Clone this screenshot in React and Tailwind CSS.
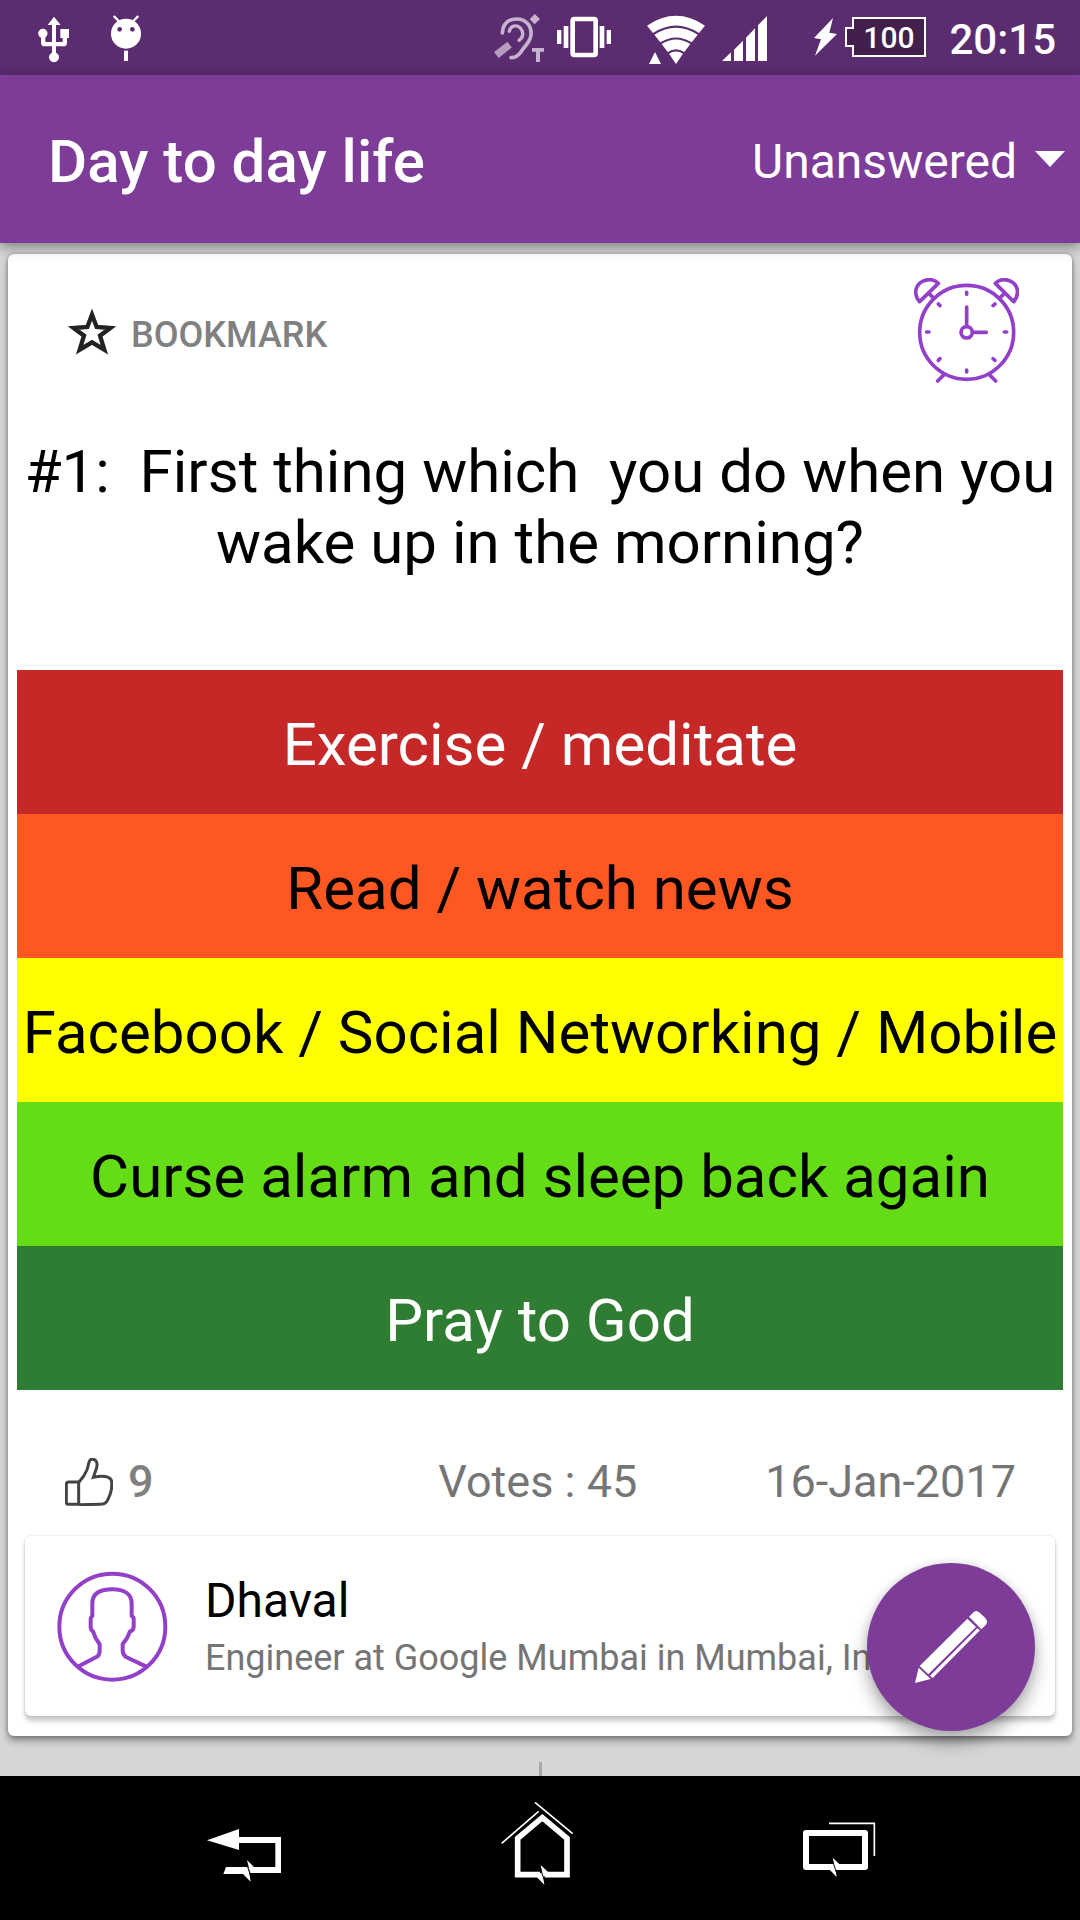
import React from "react";
import clsx from "clsx";

const filters = ["Unanswered", "Answered", "Bookmarked"];

const question = {
  text: "#1:  First thing which  you do when you wake up in the morning?",
  likes: 9,
  votes: 45,
  date: "16-Jan-2017",
  options: [
    { label: "Exercise / meditate", className: "bg-[#c62828] text-white" },
    { label: "Read / watch news", className: "bg-[#ff5722] text-black" },
    { label: "Facebook / Social Networking / Mobile", className: "bg-[#ffff00] text-black" },
    { label: "Curse alarm and sleep back again", className: "bg-[#64dd17] text-black" },
    { label: "Pray to God", className: "bg-[#2e7d32] text-white" },
  ],
};

const author = {
  name: "Dhaval",
  about: "Engineer at Google Mumbai in Mumbai, India",
};

function UsbIcon() {
  return (
    <svg className="h-[75px] w-[32px]" viewBox="114 0 96 225" fill="#fff">
      <path d="M162 50L182 75H168V126H188V114H181V87H207V114H201V128Q201 139 190 139H168V158A15 15 0 1 1 156 158V139H134Q123 139 123 128V113A14 14 0 1 1 136 112V126H156V75H143Z" />
    </svg>
  );
}

function DebugIcon() {
  return (
    <svg className="h-[75px] w-[32px]" viewBox="330 0 96 225" fill="#fff">
      <path d="M343 50L356 63M413 50L400 63" stroke="#fff" strokeWidth="7" strokeLinecap="round" />
      <circle cx="378" cy="101" r="45" />
      <circle cx="359" cy="88" r="7" fill="#5b2c6f" />
      <circle cx="397" cy="88" r="7" fill="#5b2c6f" />
      <path d="M372 152H384V183H372Z" />
    </svg>
  );
}

function HearingIcon() {
  return (
    <svg className="h-[75px] w-[54px]" viewBox="69 0 162 225" fill="none" stroke="#c7b3d0">
      <path
        d="M97 99C98 72 115 57 140 57C168 57 185 78 183 104C181 126 168 134 158 148C150 162 140 174 123 173"
        strokeWidth="11"
        strokeLinecap="round"
      />
      <path d="M118 94C121 77 139 73 150 83C163 96 160 112 147 121" strokeWidth="10" strokeLinecap="round" />
      <path d="M79 165L119 134" stroke="#b59cc0" strokeWidth="22" />
      <path d="M194 42L210 57L194 73L179 58Z" fill="#c7b3d0" stroke="none" />
      <path d="M186 144H222V155H210V186H198V155H186Z" fill="#c7b3d0" stroke="none" />
    </svg>
  );
}

function VibrateIcon() {
  return (
    <svg className="ml-[10px] h-[75px] w-[54px]" viewBox="261 0 162 225" fill="#fff">
      <rect x="308" y="57" width="69" height="108" rx="5" fill="none" stroke="#fff" strokeWidth="14" />
      <path d="M261 90H274V132H261ZM281 78H295V144H281ZM389 78H403V144H389ZM410 90H423V132H410Z" />
    </svg>
  );
}

function WifiIcon() {
  return (
    <svg className="ml-9 h-[75px] w-[58px]" viewBox="531 0 174 225" fill="#fff">
      <path d="M531 77Q618 18 705 77L687 99Q618 54 549 99Z" />
      <path d="M553 104Q618 62 683 104L665 127Q618 98 571 127Z" />
      <path d="M575 132Q618 105 661 132L643 156Q618 140 593 156Z" />
      <path d="M597 161Q618 148 639 161L618 192Z" />
      <path d="M555 156L573 192H537Z" />
    </svg>
  );
}

function SignalIcon() {
  return (
    <svg className="ml-[17px] h-[75px] w-[45px]" viewBox="756 0 135 225" fill="#fff">
      <path d="M756 183L783 157V183ZM792 149L819 122V183H792ZM828 113L855 85V183H828ZM864 76L891 48V183H864Z" />
    </svg>
  );
}

function BoltIcon() {
  return (
    <svg className="ml-[47px] h-[75px] w-[23px]" viewBox="102 0 69 225" fill="#fff">
      <path d="M159 54L102 114L123 118L105 167L171 102L148 98Z" />
    </svg>
  );
}

function Battery({ level }) {
  return (
    <div className="relative ml-2 flex h-[75px] w-[81px] items-center justify-center pl-[6px] text-3xl font-medium leading-none">
      <svg className="absolute inset-0 h-full w-full" viewBox="195 0 243 225">
        <path d="M219 54H435V168H219V138H198V84H219Z" fill="#42204b" stroke="#fff" strokeWidth="6" />
      </svg>
      <span className="relative">{level}</span>
    </div>
  );
}

function StatusBar() {
  return (
    <div className="flex h-[75px] items-center bg-[#5b2c6f] pl-[38px] pr-6 text-white">
      <UsbIcon />
      <div className="ml-10 flex">
        <DebugIcon />
      </div>
      <div className="ml-auto flex items-center">
        <HearingIcon />
        <VibrateIcon />
        <WifiIcon />
        <SignalIcon />
        <BoltIcon />
        <Battery level={100} />
        <time className="ml-[23px] pt-1 text-[42px] font-medium leading-none">20:15</time>
      </div>
    </div>
  );
}

function Toolbar() {
  return (
    <header className="relative z-10 flex h-[168px] items-center justify-between bg-[#7d3c98] pl-12 pr-[15px] text-white shadow-[0_4px_12px_rgba(0,0,0,0.4)]">
      <h1 className="pt-[5px] text-[60px] font-medium leading-[70px]">Day to day life</h1>
      <div className="flex items-center gap-[18px]">
        <select
          aria-label="Filter questions"
          className="field-sizing-content appearance-none bg-transparent pt-[5px] text-5xl leading-[56px]"
        >
          {filters.map((filter) => (
            <option key={filter}>{filter}</option>
          ))}
        </select>
        <svg className="h-4 w-[30px]" viewBox="0 0 30 16" fill="#fff">
          <path d="M0 0H30L15 16Z" />
        </svg>
      </div>
    </header>
  );
}

function StarIcon() {
  return (
    <svg className="h-[54px] w-12" viewBox="204 203 144 162" fill="none" stroke="#222" strokeWidth="13">
      <path d="M276 223L290 260L331 263L300 286L313 328L276 306L239 328L252 286L221 263L262 260Z" />
    </svg>
  );
}

function ClockIcon() {
  return (
    <svg
      className="size-[105px]"
      viewBox="102 84 315 315"
      fill="none"
      stroke="#9340c8"
      strokeWidth="11"
      strokeLinecap="round"
      strokeLinejoin="round"
    >
      <circle cx="260" cy="247" r="141" />
      <circle cx="260" cy="247" r="17" />
      <path d="M260 229V171M278 247H319" />
      <path d="M260 127V133M260 360V366M140 246H147M373 246H380M175 162L180 167M345 162L339 167M175 331L180 326M345 331L339 326" />
      <path d="M119 155L175 100C162 86 138 85 121 98C103 113 103 138 119 155Z" />
      <path d="M401 155L346 100C359 86 383 85 399 98C417 113 416 138 401 155Z" />
      <path d="M147 131L162 145M373 131L358 145" />
      <path d="M192 374L173 393M328 374L347 393" />
    </svg>
  );
}

function ThumbIcon() {
  return (
    <svg className="size-12" viewBox="195 228 144 144" fill="none" stroke="#444" strokeWidth="9">
      <path d="M199 306Q199 300 206 300H236V367H206Q199 367 199 361Z" />
      <path d="M237 300C246 290 256 276 261 263C267 247 265 232 276 232C290 230 294 246 289 260L280 286C302 281 334 279 335 300C336 308 335 316 334 323C332 334 329 342 324 352C320 363 313 367 303 367L236 368" />
    </svg>
  );
}

function AvatarIcon() {
  return (
    <svg
      className="size-[111px] shrink-0"
      viewBox="170 573 333 333"
      fill="none"
      stroke="#9340c8"
      strokeWidth="12"
      strokeLinejoin="round"
    >
      <circle cx="336" cy="740" r="159" />
      <path d="M232 860L288 831Q298 826 298 814V793C290 783 282 769 278 754Q271 751 271 740V716Q271 711 276 708V670C276 640 300 628 336 628C372 628 394 642 394 670V708Q400 711 400 716V740Q400 751 389 754C384 769 375 783 367 793V810Q367 824 377 831L438 860" />
    </svg>
  );
}

function PencilIcon() {
  return (
    <svg className="size-[72px]" viewBox="405 333 216 216" fill="#fff">
      <path d="M567 350L579 338Q588 328 599 338L616 354Q625 364 618 374L604 388Z" />
      <path d="M562 356L588 381L445 523L419 498Z" />
      <path d="M592 385L600 391L458 534L450 527Z" />
      <path d="M416 503L452 537L405 549Z" />
    </svg>
  );
}

function AuthorCard({ name, about }) {
  return (
    <div className="mx-2 flex h-[180px] items-center overflow-hidden rounded-md bg-white pl-8 shadow-[0_5px_5px_rgba(0,0,0,0.22),0_0_2px_rgba(0,0,0,0.2)]">
      <AvatarIcon />
      <div className="ml-[37px] min-w-0">
        <p className="text-5xl leading-[56px] text-black">{name}</p>
        <p className="mt-2 truncate text-4xl leading-[42px] text-[#757575]">{about}</p>
      </div>
    </div>
  );
}

function QuestionCard() {
  return (
    <article className="rounded-md bg-white px-[9px] pb-5 pt-6 shadow-[0_5px_7px_rgba(0,0,0,0.35),0_0_4px_rgba(0,0,0,0.3)]">
      <div className="flex h-[105px] items-center justify-between pl-[51px] pr-11">
        <button className="flex items-center gap-[15px] pt-2 text-4xl font-medium leading-[42px] text-[#808080]">
          <StarIcon />
          BOOKMARK
        </button>
        <ClockIcon />
      </div>

      <h2 className="mt-[53px] whitespace-pre-wrap text-center text-[60px] leading-[71px] text-black">
        {question.text}
      </h2>

      <div className="mt-[92px] flex flex-col">
        {question.options.map((option) => (
          <button
            key={option.label}
            className={clsx("h-36 whitespace-nowrap pt-[5px] text-[60px] leading-[70px]", option.className)}
          >
            {option.label}
          </button>
        ))}
      </div>

      <div className="flex items-center gap-32 pb-[28px] pl-12 pr-[47px] pt-[65px] text-[45px] leading-[53px] text-[#757575]">
        <button className="mr-auto flex items-center gap-[15px] font-medium text-[#808080]">
          <ThumbIcon />
          {question.likes}
        </button>
        <span>Votes : {question.votes}</span>
        <span>{question.date}</span>
      </div>

      <AuthorCard name={author.name} about={author.about} />
    </article>
  );
}

function NavBar() {
  return (
    <nav className="flex h-36 justify-between bg-black px-[203px]">
      <button aria-label="Back">
        <svg className="h-36 w-20" viewBox="69 -12 240 432" fill="#fff">
          <path d="M81 181L177 147V171H303V279H211L205 261L212 305L189 282H130L138 261H201L207 264L201 240L222 261H286V189H177V210Z" />
          <path d="M202 258L211 284" stroke="#000" strokeWidth="3" />
        </svg>
      </button>
      <button aria-label="Home">
        <svg className="h-36 w-20" viewBox="60 108 240 432" fill="none" stroke="#fff">
          <path d="M180 404H113V295L187 233L261 295V404H194" strokeWidth="17" />
          <path d="M65 310L176 214M165 187L278 281" strokeWidth="5" />
          <path d="M168 409L193 434L187 396ZM205 397L182 375L190 412Z" fill="#fff" stroke="none" />
          <path d="M182 388L192 418" stroke="#000" strokeWidth="3" />
        </svg>
      </button>
      <button aria-label="Recent apps">
        <svg className="h-36 w-20" viewBox="951 108 240 432" fill="none" stroke="#fff">
          <rect x="978" y="279" width="177" height="102" strokeWidth="18" strokeLinejoin="round" />
          <path d="M1047 250H1183V348" strokeWidth="5" />
          <path d="M1046 386L1070 411L1064 372ZM1080 374L1058 353L1067 390Z" fill="#fff" stroke="none" />
          <path d="M1059 367L1069 396" stroke="#000" strokeWidth="3" />
        </svg>
      </button>
    </nav>
  );
}

export default function App() {
  return (
    <div className="flex min-h-screen flex-col bg-[#d6d6d6] font-[Roboto,sans-serif]">
      <StatusBar />
      <Toolbar />
      <main className="relative flex flex-1 flex-col px-2 pt-[11px]">
        <QuestionCard />
        {/* top of the next page marker, cut off by the navigation bar */}
        <div className="mx-auto mt-auto h-[14px] w-[3px] bg-[#a8a8a8]" />
        <button
          aria-label="Write a question"
          className="absolute bottom-[45px] right-[45px] flex size-[168px] items-center justify-center rounded-full bg-[#7d3c98] shadow-[0_12px_18px_rgba(0,0,0,0.3),0_0_10px_rgba(0,0,0,0.12)]"
        >
          <PencilIcon />
        </button>
      </main>
      <NavBar />
    </div>
  );
}
